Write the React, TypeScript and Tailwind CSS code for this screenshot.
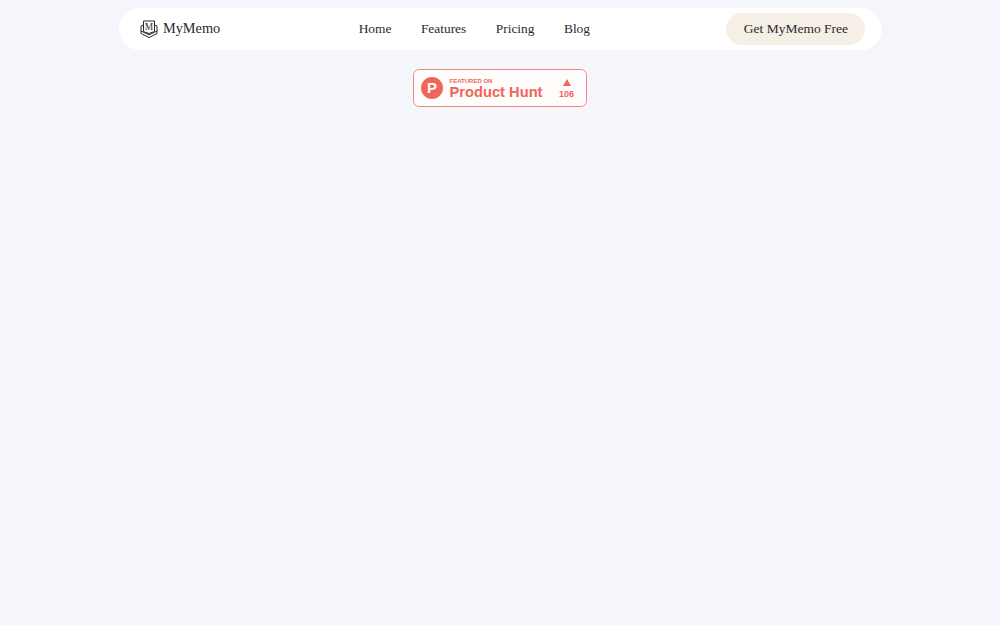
import React from "react";

const serif = "font-['Liberation_Serif',serif]";

const navLinks = ["Home", "Features", "Pricing", "Blog"];

const Logo = () => (
	<svg width="18" height="19" viewBox="0 0 18 19" fill="none" stroke="#2b2b2b" strokeWidth="1">
		<path d="M3.500 1h11v10.500L9 13.500l-5.500-2z" />
		<path d="M3.500 5L1 6v7.500l8 4 8-4V6l-2.500-1" />
		<path d="M1 11l8 3.800 8-3.800" />
		<text x="9" y="10" textAnchor="middle" fontFamily="'Liberation Serif', serif" fontSize="9.500" fill="#2b2b2b" stroke="none">
			M
		</text>
	</svg>
);

const Badge = () => (
	<a className="flex h-[38px] w-[174px] items-center rounded-[6px] border border-[#f08a80] bg-[#fffdfc] pl-[7px] font-['Liberation_Sans',sans-serif] text-[#f0665a]">
		<span className="flex h-[22px] w-[22px] items-center justify-center rounded-full bg-[#f0665a] text-[15px] font-bold text-white">
			P
		</span>
		<span className="ml-[6.500px] flex flex-col pt-[2px]">
			<span className="text-[6px] leading-[6px] font-bold">FEATURED ON</span>
			<span className="text-[14.700px] leading-[16px] font-bold">Product Hunt</span>
		</span>
		<span className="ml-[16.500px] flex flex-col items-center pt-[2px]">
			<span className="h-0 w-0 border-x-[4.500px] border-b-[7px] border-x-transparent border-b-[#f0665a]" />
			<span className="mt-[3px] text-[9px] leading-[11px] font-bold">106</span>
		</span>
	</a>
);

export default function App() {
	return (
		<div className="flex min-h-screen flex-col items-center bg-[#f5f6fb] pt-2">
			<header className={`${serif} flex h-[42px] w-[763px] items-center justify-between rounded-full bg-white pr-4 pl-[21.500px] text-[#2b2b2b]`}>
				<div className="flex items-center gap-[5px] pr-[2px]">
					<Logo />
					<span className="text-[14.300px]">MyMemo</span>
				</div>
				<nav className="flex gap-[29.500px] text-[13.400px]">
					{navLinks.map((link) => (
						<a key={link}>{link}</a>
					))}
				</nav>
				<a className="flex h-8 w-[139px] items-center justify-center rounded-full bg-[#f5efe6] text-[13.500px]">
					Get MyMemo Free
				</a>
			</header>
			<div className="mt-[19px]">
				<Badge />
			</div>
		</div>
	);
}
